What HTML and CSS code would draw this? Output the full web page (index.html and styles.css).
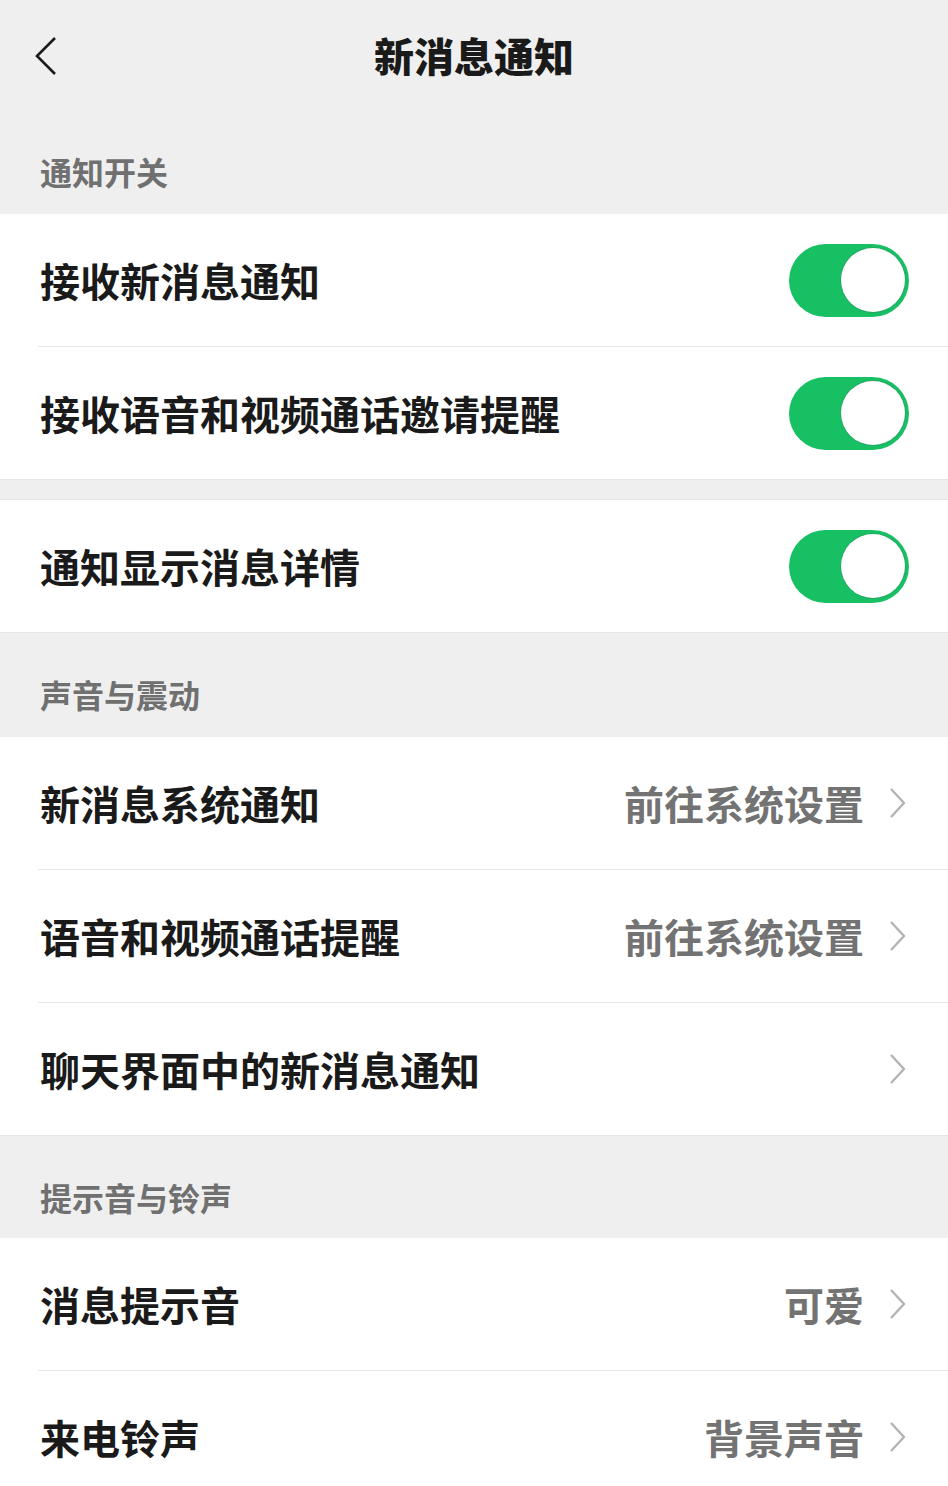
FILE: index.html
```html
<!DOCTYPE html>
<html lang="zh-CN">
<head>
  <meta charset="UTF-8" />
  <meta name="viewport" content="width=device-width, initial-scale=1" />
  <title>新消息通知</title>
  <link rel="stylesheet" href="styles.css">
</head>
<body>

  <header class="nav">
    <svg class="back" width="24" height="40" viewBox="0 0 24 40">
      <polyline points="21,2 3,20 21,38" fill="none" stroke="#1a1a1a" stroke-width="2.6" />
    </svg>
    <h1>新消息通知</h1>
  </header>

  <div class="section-title">通知开关</div>
  <div class="group">
    <div class="row">
      <span class="label">接收新消息通知</span>
      <span class="switch"><span class="knob"></span></span>
    </div>
    <div class="row">
      <span class="label">接收语音和视频通话邀请提醒</span>
      <span class="switch"><span class="knob"></span></span>
    </div>
  </div>

  <div class="group gap">
    <div class="row">
      <span class="label">通知显示消息详情</span>
      <span class="switch"><span class="knob"></span></span>
    </div>
  </div>

  <div class="section-title">声音与震动</div>
  <div class="group">
    <div class="row">
      <span class="label">新消息系统通知</span>
      <span class="extra">
        <span class="value">前往系统设置</span>
        <svg class="chevron" width="18" height="32" viewBox="0 0 18 32"><polyline points="3,2 16,16 3,30" fill="none" stroke="#b4b4b4" stroke-width="2.4" /></svg>
      </span>
    </div>
    <div class="row">
      <span class="label">语音和视频通话提醒</span>
      <span class="extra">
        <span class="value">前往系统设置</span>
        <svg class="chevron" width="18" height="32" viewBox="0 0 18 32"><polyline points="3,2 16,16 3,30" fill="none" stroke="#b4b4b4" stroke-width="2.4" /></svg>
      </span>
    </div>
    <div class="row">
      <span class="label">聊天界面中的新消息通知</span>
      <span class="extra">
        <svg class="chevron" width="18" height="32" viewBox="0 0 18 32"><polyline points="3,2 16,16 3,30" fill="none" stroke="#b4b4b4" stroke-width="2.4" /></svg>
      </span>
    </div>
  </div>

  <div class="section-title short">提示音与铃声</div>
  <div class="group">
    <div class="row">
      <span class="label">消息提示音</span>
      <span class="extra">
        <span class="value">可爱</span>
        <svg class="chevron" width="18" height="32" viewBox="0 0 18 32"><polyline points="3,2 16,16 3,30" fill="none" stroke="#b4b4b4" stroke-width="2.4" /></svg>
      </span>
    </div>
    <div class="row">
      <span class="label">来电铃声</span>
      <span class="extra">
        <span class="value">背景声音</span>
        <svg class="chevron" width="18" height="32" viewBox="0 0 18 32"><polyline points="3,2 16,16 3,30" fill="none" stroke="#b4b4b4" stroke-width="2.4" /></svg>
      </span>
    </div>
  </div>

</body>
</html>
```

FILE: styles.css
```css
body {
  margin: 0;
  background: #efefef;
  font-family: "Noto Sans CJK SC", "Noto Sans", sans-serif;
  color: #1a1a1a;
}
.nav {
  height: 110px;
  display: flex;
  align-items: center;
  justify-content: center;
  position: relative;
}
.nav h1 {
  margin: 0;
  font-size: 40px;
  font-weight: 900;
  line-height: 1;
}
.back {
  position: absolute;
  left: 34px;
  top: 36px;
}
.section-title {
  height: 104px;
  box-sizing: border-box;
  padding: 41px 40px 0;
  font-size: 32px;
  line-height: 40px;
  font-weight: 600;
  color: #707070;
}
.section-title.short {
  height: 102px;
}
.group {
  background: #fff;
  border-bottom: 1px solid #e6e6e6;
}
.gap {
  margin-top: 19px;
  border-top: 1px solid #e6e6e6;
}
.row {
  height: 132px;
  margin-left: 38px;
  padding: 0 39px 0 2px;
  display: flex;
  align-items: center;
  justify-content: space-between;
}
.row + .row {
  border-top: 1px solid #e6e6e6;
}
.label {
  font-size: 40px;
  font-weight: 700;
  line-height: 1;
}
.extra {
  display: flex;
  align-items: center;
  gap: 24px;
  margin-right: 3px;
}
.value {
  font-size: 40px;
  font-weight: 600;
  line-height: 1;
  color: #737373;
}
.switch {
  width: 120px;
  height: 73px;
  box-sizing: border-box;
  padding: 4px;
  border-radius: 37px;
  background: #18c064;
  display: flex;
  justify-content: flex-end;
  align-items: center;
}
.knob {
  width: 64px;
  height: 64px;
  border-radius: 50%;
  background: #fff;
  box-shadow: 0 0 0 1px #24a866;
}
```
